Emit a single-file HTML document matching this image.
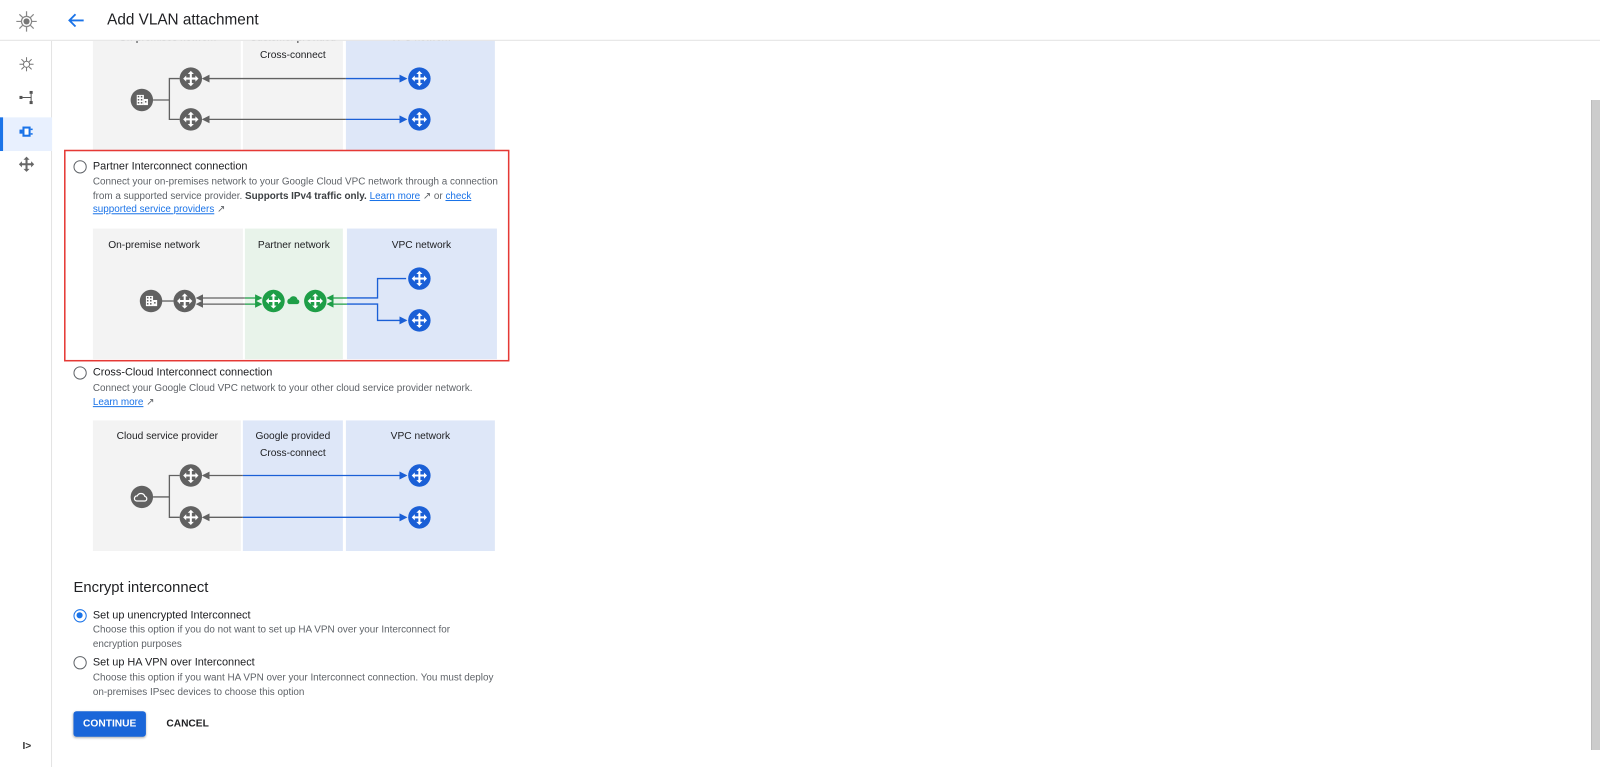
<!DOCTYPE html>
<html><head><meta charset="utf-8">
<style>
*{box-sizing:border-box;margin:0;padding:0}
body{width:1600px;height:767px;overflow:hidden;background:#fff;font-family:"Liberation Sans",Arial,sans-serif;color:#202124;position:relative}
#wrap{position:absolute;left:0;top:0;width:1568px;height:752px;transform:scale(1.0204);transform-origin:0 0}
.abs{position:absolute}
.hdr{left:0;top:0;width:1568px;height:40px;border-bottom:1px solid #e3e3e3;background:#fff;z-index:2}
.side{left:0;top:40px;width:51px;height:712px;border-right:1px solid #e3e3e3}
.t{position:absolute;white-space:nowrap}
.rad{position:absolute;width:13px;height:13px;border:1.5px solid #5f6368;border-radius:50%}
.rad.on{border-color:#1a73e8}
.rad.on::after{content:"";position:absolute;left:2px;top:2px;width:6px;height:6px;border-radius:50%;background:#1a73e8}
.lbl{font-size:10.7px;color:#202124}
.desc{font-size:9.7px;color:#5f6368;line-height:13.5px}
a{color:#1a73e8;text-decoration:underline}
</style></head><body>
<svg width="0" height="0" style="position:absolute">
<defs>
<g id="arr"><path d="M0 -7.5 L-3 -4.5 H-1 V-1 H-4.5 V-3 L-7.5 0 L-4.5 3 V1 H-1 V4.5 H-3 L0 7.5 L3 4.5 H1 V1 H4.5 V3 L7.5 0 L4.5 -3 V-1 H1 V-4.5 H3 Z" fill="#fff"/></g>
<g id="rg"><circle r="11" fill="#616161"/><use href="#arr"/></g>
<g id="rb"><circle r="11" fill="#1a5fd6"/><use href="#arr"/></g>
<g id="rn"><circle r="11" fill="#1e9e47"/><use href="#arr"/></g>
<g id="bld"><circle r="11" fill="#616161"/><rect x="-5" y="-5" width="7" height="10" fill="#fff"/><rect x="2" y="-1" width="4" height="6" fill="#fff"/><g fill="#616161"><rect x="-4" y="-4" width="1.5" height="1.5"/><rect x="-1" y="-4" width="1.5" height="1.5"/><rect x="-4" y="-1" width="1.5" height="1.5"/><rect x="-1" y="-1" width="1.5" height="1.5"/><rect x="-4" y="2" width="1.5" height="1.5"/><rect x="-1" y="2" width="1.5" height="1.5"/><rect x="3" y="1" width="1.5" height="1.5"/></g></g>
<marker id="ma" markerWidth="6" markerHeight="6" refX="5" refY="3" orient="auto-start-reverse"><path d="M0 0 L6 3 L0 6 Z" fill="context-stroke"/></marker>
</defs></svg>

<div id="wrap">
<div class="abs hdr"></div>
<svg class="abs" style="left:14px;top:9px;z-index:3" width="24" height="24" viewBox="0 0 24 24"><g stroke="#888" stroke-width="1.2" fill="none"><circle cx="12" cy="12" r="5"/><path d="M12 2v5M12 17v5M2 12h5M17 12h5M5 5l3.5 3.5M15.5 15.5L19 19M19 5l-3.5 3.5M8.5 15.5L5 19"/></g><circle cx="12" cy="12" r="3" fill="#777"/></svg>
<svg class="abs" style="left:66px;top:12px;z-index:3" width="18" height="16" viewBox="0 0 18 16"><path d="M16 8H3M8 2L2 8l6 6" stroke="#1a73e8" stroke-width="1.8" fill="none"/></svg>
<div class="t" style="left:105px;top:11px;font-size:15px;color:#202124;z-index:3">Add VLAN attachment</div>

<div class="abs side"></div>
<div class="abs" style="left:0;top:115px;width:51px;height:33px;background:#e8f0fe"></div>
<div class="abs" style="left:0;top:115px;width:3px;height:33px;background:#1a73e8"></div>
<svg class="abs" style="left:19px;top:56px" width="14" height="14" viewBox="0 0 14 14"><g stroke="#777" stroke-width="1" fill="none"><circle cx="7" cy="7" r="3"/><path d="M7 0v4M7 10v4M0 7h4M10 7h4M2 2l2.5 2.5M9.5 9.5L12 12M12 2L9.5 4.5M4.5 9.5L2 12"/></g></svg>
<svg class="abs" style="left:19px;top:89px" width="14" height="14" viewBox="0 0 14 14"><g fill="#555"><rect x="0" y="5" width="3" height="3"/><rect x="10" y="0" width="3" height="3"/><rect x="10" y="10" width="3" height="3"/></g><path d="M3 6.5H11M11.5 3V10" stroke="#555" stroke-width="1"/></svg>
<svg class="abs" style="left:19px;top:122px" width="14" height="14" viewBox="0 0 14 14"><rect x="3" y="2" width="8" height="10" fill="#1a73e8"/><rect x="0" y="5" width="3" height="4" fill="#1a73e8"/><rect x="11" y="4" width="2" height="1.5" fill="#1a73e8"/><rect x="11" y="8.5" width="2" height="1.5" fill="#1a73e8"/><rect x="5" y="4" width="4" height="6" fill="#fff"/></svg>
<svg class="abs" style="left:18px;top:153px" width="16" height="16" viewBox="-8 -8 16 16"><path d="M0 -7.5 L-3 -4.5 H-1 V-1 H-4.5 V-3 L-7.5 0 L-4.5 3 V1 H-1 V4.5 H-3 L0 7.5 L3 4.5 H1 V1 H4.5 V3 L7.5 0 L4.5 -3 V-1 H1 V-4.5 H3 Z" fill="#666"/></svg>
<div class="t" style="left:22px;top:726px;font-size:10px;color:#333;font-weight:bold">I&gt;</div>

<svg class="abs" style="left:0;top:0" width="520" height="752">
<rect x="91" y="35" width="145" height="113" fill="#f3f3f3"/>
<rect x="238" y="35" width="98" height="113" fill="#f3f3f3"/>
<rect x="339" y="35" width="146" height="113" fill="#dee7f8"/>
<text x="164" y="40" font-size="10" text-anchor="middle" fill="#202124" font-family="Liberation Sans">On-premises network</text>
<text x="287" y="40" font-size="10" text-anchor="middle" fill="#202124" font-family="Liberation Sans">Customer provided</text>
<text x="412" y="40" font-size="10" text-anchor="middle" fill="#202124" font-family="Liberation Sans">VPC network</text>
<path d="M150 98H166V77H176M166 98V117H176" stroke="#616161" stroke-width="1.3" fill="none"/>
<line x1="199" y1="77" x2="339" y2="77" stroke="#616161" stroke-width="1.3" marker-start="url(#ma)"/>
<line x1="339" y1="77" x2="398" y2="77" stroke="#1a5fd6" stroke-width="1.3" marker-end="url(#ma)"/>
<line x1="199" y1="117" x2="339" y2="117" stroke="#616161" stroke-width="1.3" marker-start="url(#ma)"/>
<line x1="339" y1="117" x2="398" y2="117" stroke="#1a5fd6" stroke-width="1.3" marker-end="url(#ma)"/>
<use href="#bld" x="139" y="98"/>
<use href="#rg" x="187" y="77"/><use href="#rg" x="187" y="117"/>
<use href="#rb" x="411" y="77"/><use href="#rb" x="411" y="117"/>
<text x="287" y="57" font-size="10" text-anchor="middle" fill="#202124" font-family="Liberation Sans">Cross-connect</text>

<rect x="91" y="224" width="147" height="128" fill="#f3f3f3"/>
<rect x="240" y="224" width="96" height="128" fill="#e8f3ea"/>
<rect x="340" y="224" width="147" height="128" fill="#dee7f8"/>
<text x="151" y="243" font-size="10" text-anchor="middle" fill="#202124" font-family="Liberation Sans">On-premise network</text>
<text x="288" y="243" font-size="10" text-anchor="middle" fill="#202124" font-family="Liberation Sans">Partner network</text>
<text x="413" y="243" font-size="10" text-anchor="middle" fill="#202124" font-family="Liberation Sans">VPC network</text>
<line x1="158" y1="295" x2="170" y2="295" stroke="#616161" stroke-width="1.3"/>
<line x1="193" y1="292" x2="240" y2="292" stroke="#616161" stroke-width="1.2" marker-start="url(#ma)"/>
<line x1="193" y1="298" x2="240" y2="298" stroke="#616161" stroke-width="1.2" marker-start="url(#ma)"/>
<line x1="240" y1="292" x2="256" y2="292" stroke="#1e9e47" stroke-width="1.2" marker-end="url(#ma)"/>
<line x1="240" y1="298" x2="256" y2="298" stroke="#1e9e47" stroke-width="1.2" marker-end="url(#ma)"/>
<line x1="321" y1="292" x2="340" y2="292" stroke="#1e9e47" stroke-width="1.2" marker-start="url(#ma)"/>
<line x1="321" y1="298" x2="340" y2="298" stroke="#1e9e47" stroke-width="1.2" marker-start="url(#ma)"/>
<path d="M340 292H370V273H398M340 298H370V314H398" stroke="#1a5fd6" stroke-width="1.3" fill="none" marker-end="url(#ma)"/>
<use href="#bld" x="148" y="295"/>
<use href="#rg" x="181" y="295"/>
<use href="#rn" x="268" y="295"/><use href="#rn" x="309" y="295"/>
<path d="M283 298a3 3 0 0 1 1-5.5a4 4 0 0 1 7.5 1a2.3 2.3 0 0 1 0 4.5z" fill="#1e9e47"/>
<use href="#rb" x="411" y="273"/><use href="#rb" x="411" y="314"/>

<rect x="91" y="412" width="145" height="128" fill="#f3f3f3"/>
<rect x="238" y="412" width="98" height="128" fill="#dee7f8"/>
<rect x="339" y="412" width="146" height="128" fill="#dee7f8"/>
<text x="164" y="430" font-size="10" text-anchor="middle" fill="#202124" font-family="Liberation Sans">Cloud service provider</text>
<text x="287" y="430" font-size="10" text-anchor="middle" fill="#202124" font-family="Liberation Sans">Google provided</text>
<text x="287" y="447" font-size="10" text-anchor="middle" fill="#202124" font-family="Liberation Sans">Cross-connect</text>
<text x="412" y="430" font-size="10" text-anchor="middle" fill="#202124" font-family="Liberation Sans">VPC network</text>
<path d="M150 487H166V466H176M166 487V507H176" stroke="#616161" stroke-width="1.3" fill="none"/>
<line x1="199" y1="466" x2="238" y2="466" stroke="#616161" stroke-width="1.3" marker-start="url(#ma)"/>
<line x1="238" y1="466" x2="398" y2="466" stroke="#1a5fd6" stroke-width="1.3" marker-end="url(#ma)"/>
<line x1="199" y1="507" x2="238" y2="507" stroke="#616161" stroke-width="1.3" marker-start="url(#ma)"/>
<line x1="238" y1="507" x2="398" y2="507" stroke="#1a5fd6" stroke-width="1.3" marker-end="url(#ma)"/>
<circle cx="139" cy="487" r="11" fill="#616161"/>
<path d="M134 491a2.5 2.5 0 0 1 0.5-5a4 4 0 0 1 7.5 0.5a2.3 2.3 0 0 1 0 4.5z" fill="none" stroke="#fff" stroke-width="1.2"/>
<use href="#rg" x="187" y="466"/><use href="#rg" x="187" y="507"/>
<use href="#rb" x="411" y="466"/><use href="#rb" x="411" y="507"/>

<rect x="63.5" y="147.5" width="435" height="206" fill="none" stroke="#e53935" stroke-width="1.5"/>
</svg>

<div class="rad" style="left:72px;top:157px"></div>
<div class="t lbl" style="left:91px;top:157px">Partner Interconnect connection</div>
<div class="t desc" style="left:91px;top:172px">Connect your on-premises network to your Google Cloud VPC network through a connection<br>from a supported service provider. <b style="color:#3c4043">Supports IPv4 traffic only.</b> <a>Learn more</a> ↗ or <a>check</a><br><a>supported service providers</a> ↗</div>

<div class="rad" style="left:72px;top:359px"></div>
<div class="t lbl" style="left:91px;top:359px">Cross-Cloud Interconnect connection</div>
<div class="t desc" style="left:91px;top:374px">Connect your Google Cloud VPC network to your other cloud service provider network.<br><a>Learn more</a> ↗</div>

<div class="t" style="left:72px;top:568px;font-size:14.5px;color:#202124">Encrypt interconnect</div>
<div class="rad on" style="left:72px;top:597px"></div>
<div class="t lbl" style="left:91px;top:597px">Set up unencrypted Interconnect</div>
<div class="t desc" style="left:91px;top:611px">Choose this option if you do not want to set up HA VPN over your Interconnect for<br>encryption purposes</div>
<div class="rad" style="left:72px;top:643px"></div>
<div class="t lbl" style="left:91px;top:643px">Set up HA VPN over Interconnect</div>
<div class="t desc" style="left:91px;top:658px">Choose this option if you want HA VPN over your Interconnect connection. You must deploy<br>on-premises IPsec devices to choose this option</div>

<div class="abs" style="left:72px;top:697px;width:71px;height:25px;background:#1a66d9;border-radius:3px;box-shadow:0 1px 2px rgba(0,0,0,.3);color:#fff;font-size:10px;font-weight:bold;text-align:center;line-height:25px">CONTINUE</div>
<div class="t" style="left:163px;top:704px;font-size:10px;font-weight:bold;color:#202124">CANCEL</div>
</div>

<div class="abs" style="left:1591px;top:100px;width:9px;height:650px;background:#cccccc;border-left:1px solid #bbb"></div>
</body></html>
